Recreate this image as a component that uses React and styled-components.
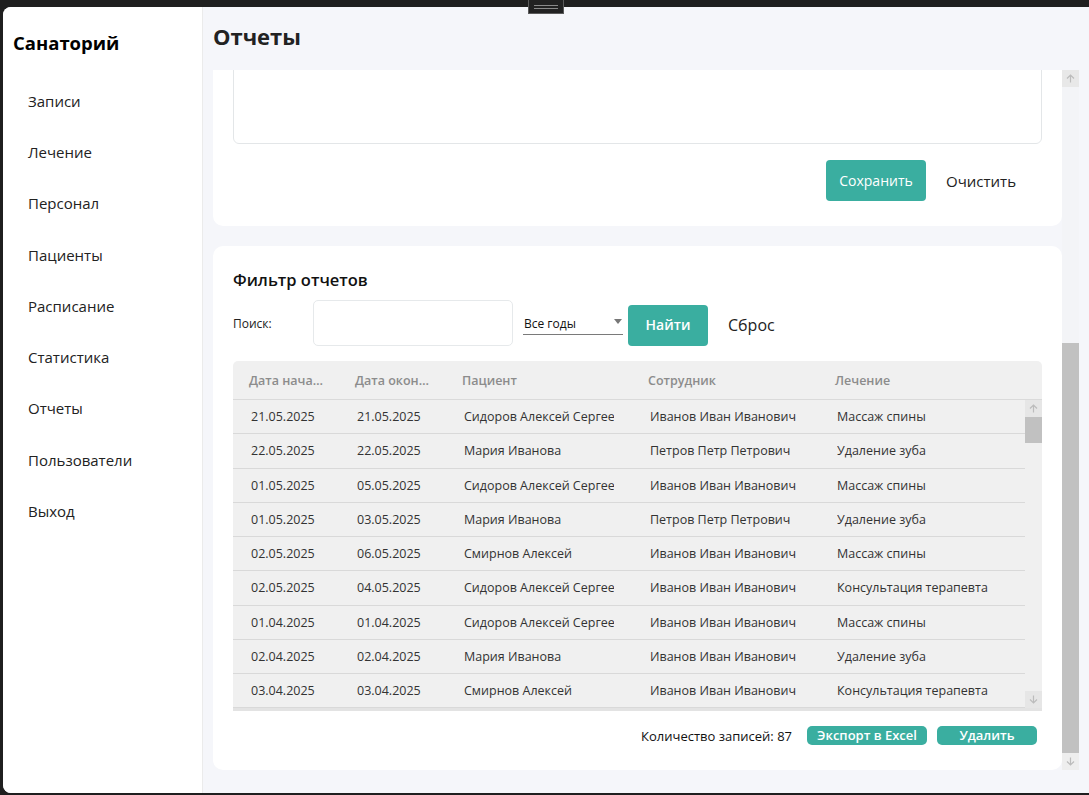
import React, { useLayoutEffect, useRef, useState } from 'react'
import styled, { createGlobalStyle } from 'styled-components'

const GlobalStyle = createGlobalStyle`
  html, body {
    margin: 0;
    padding: 0;
    background: #1f1f1f;
    font-family: "Open Sans", "Noto Sans", "Liberation Sans", sans-serif;
    color: #222;
  }
  * { box-sizing: border-box; }
`

const TEAL = '#3aaea0'

const menu = [
  'Записи',
  'Лечение',
  'Персонал',
  'Пациенты',
  'Расписание',
  'Статистика',
  'Отчеты',
  'Пользователи',
  'Выход',
]

const columns = ['Дата начала', 'Дата окончания', 'Пациент', 'Сотрудник', 'Лечение']

const rows = [
  ['21.05.2025', '21.05.2025', 'Сидоров Алексей Сергеевич', 'Иванов Иван Иванович', 'Массаж спины'],
  ['22.05.2025', '22.05.2025', 'Мария Иванова', 'Петров Петр Петрович', 'Удаление зуба'],
  ['01.05.2025', '05.05.2025', 'Сидоров Алексей Сергеевич', 'Иванов Иван Иванович', 'Массаж спины'],
  ['01.05.2025', '03.05.2025', 'Мария Иванова', 'Петров Петр Петрович', 'Удаление зуба'],
  ['02.05.2025', '06.05.2025', 'Смирнов Алексей', 'Иванов Иван Иванович', 'Массаж спины'],
  ['02.05.2025', '04.05.2025', 'Сидоров Алексей Сергеевич', 'Иванов Иван Иванович', 'Консультация терапевта'],
  ['01.04.2025', '01.04.2025', 'Сидоров Алексей Сергеевич', 'Иванов Иван Иванович', 'Массаж спины'],
  ['02.04.2025', '02.04.2025', 'Мария Иванова', 'Иванов Иван Иванович', 'Удаление зуба'],
  ['03.04.2025', '03.04.2025', 'Смирнов Алексей', 'Иванов Иван Иванович', 'Консультация терапевта'],
]

const Desktop = styled.div`
  position: relative;
  height: 795px;
  padding: 7px 0 2px 3px;
  overflow: hidden;
`

const Grip = styled.div`
  position: absolute;
  top: 0;
  left: 528px;
  width: 36px;
  height: 14px;
  background: #222;
  border: 1px solid #5a5a5a;
  border-top: none;
  display: flex;
  flex-direction: column;
  align-items: center;
  justify-content: center;
  gap: 2px;
  z-index: 5;

  span {
    display: block;
    width: 24px;
    height: 1px;
    background: #8a8a8a;
  }
`

const Window = styled.div`
  display: flex;
  height: 786px;
  background: #f5f6fa;
  border-radius: 8px 0 0 8px;
  overflow: hidden;
`

const Sidebar = styled.nav`
  width: 200px;
  flex-shrink: 0;
  background: #fff;
  border-right: 1px solid #ebebeb;
  padding: 22px 0 0 10px;
`

const Brand = styled.div`
  font-size: 18.5px;
  line-height: 28px;
  font-weight: 700;
  color: #000;
  margin-bottom: 18px;
`

const MenuItem = styled.div`
  height: 51.3px;
  display: flex;
  align-items: center;
  padding-left: 15px;
  font-size: 15px;
  color: #222;
`

const Main = styled.main`
  flex: 1;
  display: flex;
  flex-direction: column;
  min-width: 0;
`

const Header = styled.header`
  height: 63px;
  padding: 14px 0 0 10px;
  font-size: 22px;
  line-height: 30px;
  font-weight: 700;
  color: #222;
`

const ScrollArea = styled.div`
  height: 700px;
  display: flex;
  padding: 0 10px 0 10px;
`

const Viewport = styled.div`
  flex: 1;
  overflow: hidden;
  min-width: 0;
`

const Content = styled.div`
  display: flex;
  flex-direction: column;
  gap: 20px;
`

const Card = styled.section`
  background: #fff;
  border-radius: 10px;
  padding: 22px 20px 25px;
`

const CardTitle = styled.h2`
  margin: 0 0 ${p => p.$gap || 16}px;
  font-size: 16.5px;
  line-height: 24px;
  font-weight: 600;
  color: #111;
`

const FieldStack = styled.div`
  display: flex;
  flex-direction: column;
  gap: 12px;
  margin-bottom: 16px;
`

const Label = styled.label`
  width: ${p => p.$w || 80}px;
  flex-shrink: 0;
  font-size: 12px;
  color: #222;
`

const TextInput = styled.div`
  width: ${p => p.$w || 200}px;
  height: 46px;
  border: 1px solid #e6e9eb;
  border-radius: 5px;
  background: #fff;
`

const TextArea = styled.div`
  height: ${p => p.$h}px;
  border: 1px solid #e3e6e8;
  border-radius: 6px;
  background: #fff;
`

const Actions = styled.div`
  display: flex;
  justify-content: flex-end;
  align-items: center;
  gap: 20px;
  margin-top: 16px;
  padding-right: 26px;
`

const TealButton = styled.button`
  width: ${p => p.$w}px;
  height: ${p => p.$h}px;
  flex-shrink: 0;
  border: none;
  border-radius: ${p => p.$r || 4}px;
  background: ${TEAL};
  color: #fff;
  font-family: inherit;
  font-size: ${p => p.$size || 14}px;
  font-weight: ${p => p.$bold ? 600 : 400};
  padding: 0;
  line-height: 1;
  white-space: nowrap;
`

const LinkButton = styled.span`
  font-size: ${p => p.$size || 15}px;
  color: #222;
`

const FilterRow = styled.div`
  display: flex;
  align-items: center;
  height: 46px;
  margin-bottom: 15px;
`

const YearSelect = styled.div`
  width: 100px;
  margin-left: 10px;
  margin-top: 2px;
  height: 22px;
  border-bottom: 1px solid #7a7a7a;
  display: flex;
  align-items: center;
  justify-content: space-between;
  font-size: 12px;
  padding: 0 1px;
  color: #111;

  &::after {
    content: '';
    border-left: 4px solid transparent;
    border-right: 4px solid transparent;
    border-top: 5px solid #777;
    margin-bottom: 4px;
  }
`

const Grid = styled.div`
  background: #f0f0f0;
  border-radius: 5px 5px 0 0;
  border-bottom: 3px solid #e3e3e3;
`

const HeaderRow = styled.div`
  display: grid;
  grid-template-columns: 106px 107px 186px 187px 1fr;
  height: 39px;
  align-items: center;
  border-bottom: 1px solid #dadada;
`

const HeadCell = styled.div`
  padding-left: 16px;
  padding-right: 14px;
  font-size: 12.5px;
  font-weight: 600;
  color: #8c8c8c;
  white-space: nowrap;
  overflow: hidden;
  text-overflow: ellipsis;
`

const GridBody = styled.div`
  display: flex;
  height: 308px;
`

const BodyRows = styled.div`
  flex: 1;
  overflow: hidden;
`

const Row = styled.div`
  display: grid;
  grid-template-columns: 106px 107px 186px 187px 1fr;
  height: 34.25px;
  align-items: center;
  border-bottom: 1px solid #d9d9d9;
`

const Cell = styled.div`
  padding: 0 18px;
  font-size: 12.5px;
  color: #333;
  white-space: nowrap;

  span {
    display: block;
    overflow: hidden;
  }
`

const ScrollBar = styled.div`
  width: 17px;
  flex-shrink: 0;
  display: flex;
  flex-direction: column;
  background: ${p => p.$track};
`

const ScrollArrow = styled.div`
  height: 17px;
  flex-shrink: 0;
  display: flex;
  align-items: center;
  justify-content: center;
  background: ${p => p.$bg || 'transparent'};
`

const Track = styled.div`
  flex: 1;
  position: relative;
`

const Thumb = styled.div`
  position: absolute;
  left: 0;
  right: 0;
  background: #c1c1c1;
`

const Footer = styled.div`
  display: flex;
  justify-content: flex-end;
  align-items: center;
  gap: 10px;
  margin-top: 15px;
  padding-right: 5px;
`

const Count = styled.span`
  font-size: 13px;
  color: #111;
  margin-right: 5px;
`

function Arrow({ down }) {
  return (
    <svg width="9" height="9" viewBox="0 0 9 9" style={{ transform: down ? 'rotate(180deg)' : 'none' }}>
      <path d="M4.5 8.5V1M1 4.5L4.5 1L8 4.5" fill="none" stroke="#bcbcbc" strokeWidth="1.2" />
    </svg>
  )
}

function VScroll({ track, arrowBg, thumbTop, thumbHeight, downBg }) {
  return (
    <ScrollBar $track={track}>
      <ScrollArrow $bg={arrowBg}><Arrow /></ScrollArrow>
      <Track>
        <Thumb style={{ top: thumbTop, height: thumbHeight }} />
      </Track>
      <ScrollArrow $bg={downBg}><Arrow down /></ScrollArrow>
    </ScrollBar>
  )
}

// upper part of this card is scrolled out of view in the reference
function ReportForm() {
  return (
    <Card>
      <FieldStack>
        <TextInput $w={300} />
        <TextInput $w={300} />
        <TextInput $w={300} />
        <TextInput $w={300} />
      </FieldStack>
      <TextArea $h={252} />
      <Actions>
        <TealButton $w={100} $h={41}>Сохранить</TealButton>
        <LinkButton>Очистить</LinkButton>
      </Actions>
    </Card>
  )
}

function ReportFilter() {
  return (
    <Card>
      <CardTitle $gap={8}>Фильтр отчетов</CardTitle>
      <FilterRow>
        <Label $w={80}>Поиск:</Label>
        <TextInput $w={200} />
        <YearSelect>Все годы</YearSelect>
        <TealButton $w={80} $h={41} $bold style={{ marginLeft: 5, marginTop: 4 }}>Найти</TealButton>
        <LinkButton $size={16} style={{ marginLeft: 20, marginTop: 4 }}>Сброс</LinkButton>
      </FilterRow>
      <Grid>
        <HeaderRow>
          {columns.map(c => <HeadCell key={c}>{c}</HeadCell>)}
        </HeaderRow>
        <GridBody>
          <BodyRows>
            {rows.map((r, i) => (
              <Row key={i}>
                {r.map((v, j) => <Cell key={j}><span>{v}</span></Cell>)}
              </Row>
            ))}
          </BodyRows>
          <VScroll track="#f0f0f0" arrowBg="#e6e6e6" downBg="#e6e6e6" thumbTop={0} thumbHeight={26} />
        </GridBody>
      </Grid>
      <Footer>
        <Count>Количество записей: 87</Count>
        <TealButton $w={120} $h={19} $r={5} $size={13} $bold>Экспорт в Excel</TealButton>
        <TealButton $w={100} $h={19} $r={5} $size={13} $bold>Удалить</TealButton>
      </Footer>
    </Card>
  )
}

export default function App() {
  const viewRef = useRef(null)
  const [thumb, setThumb] = useState({ top: 0, height: 0 })

  useLayoutEffect(() => {
    const el = viewRef.current
    el.scrollTop = el.scrollHeight
    const track = el.clientHeight - 34
    const ratio = el.clientHeight / el.scrollHeight
    const height = Math.round(track * ratio)
    const top = Math.round((track - height) * (el.scrollTop / (el.scrollHeight - el.clientHeight || 1)))
    setThumb({ top, height })
  }, [])

  return (
    <>
      <GlobalStyle />
      <Desktop>
        <Grip><span /><span /></Grip>
        <Window>
          <Sidebar>
            <Brand>Санаторий</Brand>
            {menu.map(m => <MenuItem key={m}>{m}</MenuItem>)}
          </Sidebar>
          <Main>
            <Header>Отчеты</Header>
            <ScrollArea>
              <Viewport ref={viewRef}>
                <Content>
                  <ReportForm />
                  <ReportFilter />
                </Content>
              </Viewport>
              <VScroll track="#f3f4f7" arrowBg="#e8e8e8" downBg="#eeeeee" thumbTop={thumb.top} thumbHeight={thumb.height} />
            </ScrollArea>
          </Main>
        </Window>
      </Desktop>
    </>
  )
}
